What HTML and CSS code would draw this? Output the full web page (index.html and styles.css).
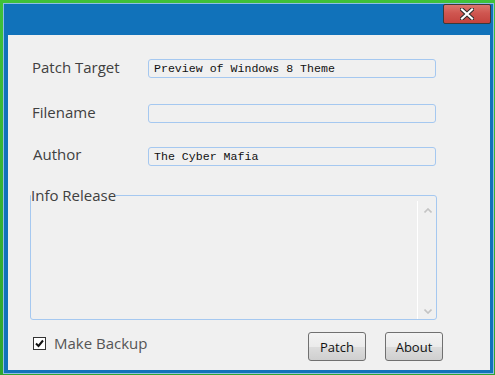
FILE: index.html
```html
<!DOCTYPE html>
<html lang="en">
<head>
  <meta charset="UTF-8" />
  <title>Patcher</title>
  <link rel="stylesheet" href="styles.css">
</head>
<body>

  <!-- Window -->
  <div class="window">
    <div class="titlebar">
      <button class="close-btn" aria-label="Close">
        <svg width="14" height="12" viewBox="0 0 14 12">
          <path d="M2 1.5 L12 10.5 M12 1.5 L2 10.5" stroke="#2b2b2b" stroke-width="4.2" stroke-linecap="square"/>
          <path d="M2 1.5 L12 10.5 M12 1.5 L2 10.5" stroke="#ffffff" stroke-width="2.2" stroke-linecap="square"/>
        </svg>
      </button>
    </div>

    <div class="client">
      <div class="fields">
        <div class="row">
          <label class="label">Patch Target</label>
          <div class="textbox">Preview of Windows 8 Theme</div>
        </div>
        <div class="row">
          <label class="label">Filename</label>
          <div class="textbox"></div>
        </div>
        <div class="row">
          <label class="label author">Author</label>
          <div class="textbox">The Cyber Mafia</div>
        </div>
      </div>

      <fieldset class="group">
        <legend>Info Release</legend>
        <div class="release">
          <div class="vscroll">
            <svg width="8" height="5" viewBox="0 0 8 5"><path d="M0.5 4.5 L4 1 L7.5 4.5" fill="none" stroke="#c4c4c4" stroke-width="1.6"/></svg>
            <svg width="8" height="5" viewBox="0 0 8 5"><path d="M0.5 0.5 L4 4 L7.5 0.5" fill="none" stroke="#c4c4c4" stroke-width="1.6"/></svg>
          </div>
        </div>
      </fieldset>

      <div class="bottom">
        <span class="checkbox">
          <svg width="11" height="11" viewBox="0 0 11 11"><path d="M2 5.5 L4.5 8 L9 2.5" fill="none" stroke="#111" stroke-width="2"/></svg>
        </span>
        <span class="check-label">Make Backup</span>
        <button class="btn first">Patch</button>
        <button class="btn">About</button>
      </div>
    </div>
  </div>

</body>
</html>
```

FILE: styles.css
```css
/* Reset */
* { margin: 0; padding: 0; box-sizing: border-box; }

body {
  width: 495px;
  height: 375px;
  overflow: hidden;
  background: linear-gradient(to bottom, #3fc13a, #2fa52f);
  font-family: 'Open Sans', 'Noto Sans', sans-serif;
}

/* Window frame */
.window {
  margin: 3px 0 0 3px;
  width: 491px;
  height: 371px;
  background: #1172ba;
  border: 1px solid #8fbde4;
  padding: 0 3px 3px 4px;
  display: flex;
  flex-direction: column;
}

.titlebar {
  height: 31px;
  display: flex;
  justify-content: flex-end;
  align-items: flex-start;
}

.close-btn {
  width: 48px;
  height: 20px;
  margin-right: -1px;
  border: 1px solid #3a3a3a;
  border-radius: 2px;
  background: linear-gradient(to bottom, #dc756c 0%, #cf5650 45%, #c4433e 100%);
  display: flex;
  align-items: center;
  justify-content: center;
}

/* Client area */
.client {
  flex: 1;
  background: #f0f0f0;
  display: flex;
  flex-direction: column;
  color: #404040;
}

.fields { padding-top: 24px; }

.row {
  display: flex;
  align-items: center;
  height: 19px;
  padding-left: 24px;
  margin-bottom: 26px;
}
.row:nth-child(2) { margin-bottom: 24px; }
.row:last-child { margin-bottom: 0; }

.label {
  width: 116px;
  font-size: 15px;
  line-height: 19px;
  padding-bottom: 3px;
}
.label.author { padding-left: 1px; padding-bottom: 5px; }

.textbox {
  width: 288px;
  height: 19px;
  border: 1px solid #a5c8f0;
  border-radius: 3px;
  padding: 0 5px;
  font-family: 'Liberation Mono', monospace;
  font-size: 11.6px;
  line-height: 17px;
  color: #111;
}

/* Group box */
.group {
  margin: 19px 0 0 22px;
  width: 407px;
  border: 1px solid #a5c8f0;
  border-radius: 0 3px 3px 3px;
  padding: 0;
}
.group legend {
  font-size: 15px;
  line-height: 20px;
  padding: 0;
  color: #404040;
}
.release {
  height: 114px;
  display: flex;
  justify-content: flex-end;
}
.vscroll {
  width: 19px;
  margin-top: -4px;
  border-left: 1px solid #ffffff;
  display: flex;
  flex-direction: column;
  justify-content: space-between;
  align-items: center;
  padding: 7px 0 5px 2px;
}

/* Bottom row */
.bottom {
  margin-top: auto;
  display: flex;
  align-items: center;
  padding: 0 47px 9px 25px;
}
.checkbox {
  width: 13px;
  height: 13px;
  border: 1px solid #333;
  background: #fff;
  display: flex;
  align-items: center;
  justify-content: center;
  margin-bottom: 6px;
}
.check-label {
  margin-left: 8px;
  margin-bottom: 7px;
  font-size: 15px;
  color: #555;
}
.btn {
  width: 58px;
  height: 29px;
  border: 1px solid #707070;
  border-radius: 3px;
  background: linear-gradient(to bottom, #f3f3f3 0%, #ebebeb 50%, #dddddd 51%, #cfcfcf 100%);
  font-family: 'Open Sans', sans-serif;
  font-size: 13px;
  color: #111;
  margin-left: 19px;
}
.btn.first { margin-left: auto; }
```
